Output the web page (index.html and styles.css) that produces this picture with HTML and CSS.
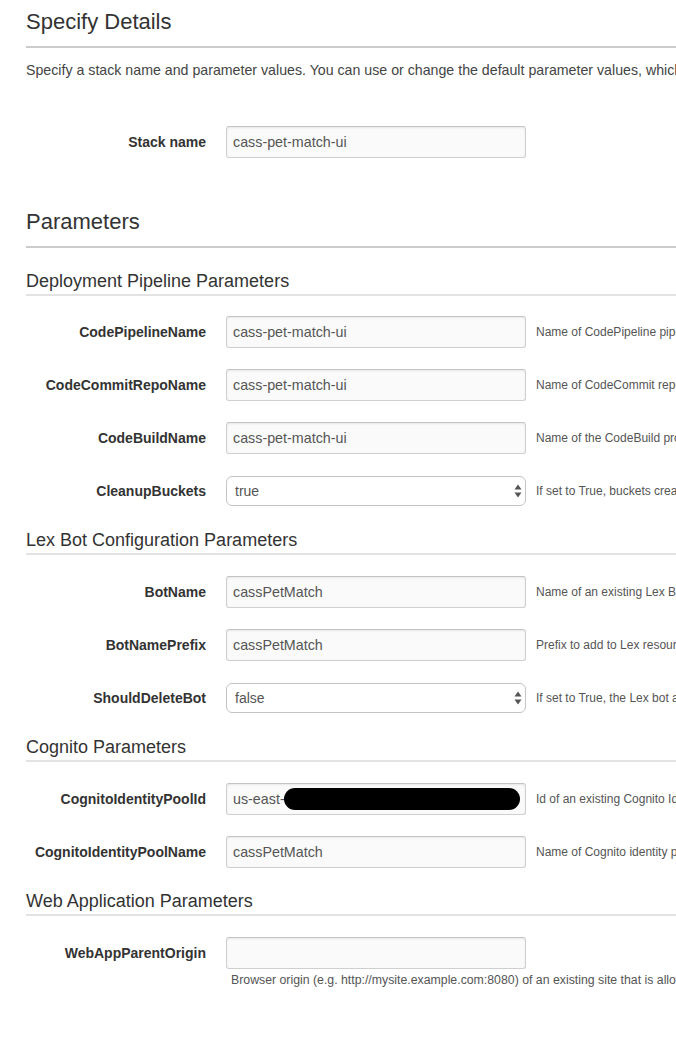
FILE: index.html
```html
<!DOCTYPE html>
<html>
<head>
<meta charset="utf-8">
<link rel="stylesheet" href="styles.css">
</head>
<body>
<main class="page">
  <h1 class="title">Specify Details</h1>
  <p class="intro">Specify a stack name and parameter values. You can use or change the default parameter values, which are defined in the AWS CloudFormation template.</p>

  <div class="row stack-row">
    <label class="label">Stack name</label>
    <input class="field" type="text" value="cass-pet-match-ui">
  </div>

  <h1 class="title params">Parameters</h1>

  <h2 class="group">Deployment Pipeline Parameters</h2>
  <div class="row first tight">
    <label class="label">CodePipelineName</label>
    <input class="field" type="text" value="cass-pet-match-ui">
    <span class="help">Name of CodePipeline pipeline</span>
  </div>
  <div class="row">
    <label class="label">CodeCommitRepoName</label>
    <input class="field" type="text" value="cass-pet-match-ui">
    <span class="help">Name of CodeCommit repository</span>
  </div>
  <div class="row">
    <label class="label">CodeBuildName</label>
    <input class="field" type="text" value="cass-pet-match-ui">
    <span class="help">Name of the CodeBuild project</span>
  </div>
  <div class="row">
    <label class="label">CleanupBuckets</label>
    <span class="select-wrap">
      <select class="select"><option>true</option><option>false</option></select>
      <svg class="arrows" width="8" height="14" viewBox="0 0 8 14"><path d="M4 0.5 L7.5 5.5 L0.5 5.5 Z M4 13.5 L7.5 8.5 L0.5 8.5 Z" fill="#555"/></svg>
    </span>
    <span class="help">If set to True, buckets created by this template will be deleted on stack deletion</span>
  </div>

  <h2 class="group">Lex Bot Configuration Parameters</h2>
  <div class="row first">
    <label class="label">BotName</label>
    <input class="field" type="text" value="cassPetMatch">
    <span class="help">Name of an existing Lex Bot to be used by the web app</span>
  </div>
  <div class="row">
    <label class="label">BotNamePrefix</label>
    <input class="field" type="text" value="cassPetMatch">
    <span class="help">Prefix to add to Lex resource names</span>
  </div>
  <div class="row">
    <label class="label">ShouldDeleteBot</label>
    <span class="select-wrap">
      <select class="select"><option>false</option><option>true</option></select>
      <svg class="arrows" width="8" height="14" viewBox="0 0 8 14"><path d="M4 0.5 L7.5 5.5 L0.5 5.5 Z M4 13.5 L7.5 8.5 L0.5 8.5 Z" fill="#555"/></svg>
    </span>
    <span class="help">If set to True, the Lex bot and associated resources will be deleted</span>
  </div>

  <h2 class="group">Cognito Parameters</h2>
  <div class="row first">
    <label class="label">CognitoIdentityPoolId</label>
    <span class="redact-wrap">
      <input class="field" type="text" value="us-east-">
      <span class="redact"></span>
    </span>
    <span class="help">Id of an existing Cognito Identity Pool</span>
  </div>
  <div class="row">
    <label class="label">CognitoIdentityPoolName</label>
    <input class="field" type="text" value="cassPetMatch">
    <span class="help">Name of Cognito identity pool</span>
  </div>

  <h2 class="group">Web Application Parameters</h2>
  <div class="row first">
    <label class="label">WebAppParentOrigin</label>
    <input class="field" type="text" value="">
  </div>
  <p class="help-below">Browser origin (e.g. http://mysite.example.com:8080) of an existing site that is allowed to send messages to this site</p>
</main>
</body>
</html>
```

FILE: styles.css
```css
html, body {
  margin: 0;
  padding: 0;
  background: #ffffff;
  overflow: hidden;
}

body {
  font-family: "Liberation Sans", Arial, sans-serif;
  color: #444444;
}

.page {
  width: 1100px;
  padding: 9px 0 60px 26px;
}

.title {
  margin: 0;
  font-size: 22px;
  line-height: 26px;
  font-weight: normal;
  color: #333333;
  padding-bottom: 11px;
  border-bottom: 2px solid #cccccc;
}

.title.params {
  margin-top: 51px;
}

.intro {
  margin: 13px 0 0 0;
  font-size: 14.2px;
  line-height: 18px;
  color: #444444;
  white-space: nowrap;
}

.group {
  margin: 22px 0 0 0;
  font-size: 18px;
  line-height: 22px;
  font-weight: normal;
  color: #333333;
  padding-bottom: 2px;
  border-bottom: 2px solid #e3e3e3;
}

.row {
  display: flex;
  align-items: center;
  height: 32px;
  margin-top: 21px;
}

.row.first {
  margin-top: 21px;
}

.row.first.tight {
  margin-top: 20px;
}

.stack-row {
  margin-top: 47px;
}

.label {
  width: 180px;
  flex: none;
  margin-right: 20px;
  text-align: right;
  font-size: 14px;
  font-weight: bold;
  color: #333333;
  white-space: nowrap;
}

.field {
  box-sizing: border-box;
  width: 300px;
  height: 32px;
  flex: none;
  margin: 0;
  padding: 0 6px;
  border: 1px solid #cfcfcf;
  border-top-color: #c4c4c4;
  border-radius: 3px;
  background: #fafafa;
  box-shadow: inset 0 1px 2px rgba(0, 0, 0, 0.08);
  font-family: "Liberation Sans", Arial, sans-serif;
  font-size: 14.3px;
  color: #555555;
  outline: none;
}

.select-wrap,
.redact-wrap {
  position: relative;
  display: block;
  width: 300px;
  flex: none;
}

.select {
  box-sizing: border-box;
  display: block;
  width: 300px;
  height: 30px;
  margin: 0;
  padding: 0 8px;
  border: 1px solid #c4c4c4;
  border-radius: 6px;
  background: #ffffff;
  -webkit-appearance: none;
  appearance: none;
  font-family: "Liberation Sans", Arial, sans-serif;
  font-size: 14px;
  color: #555555;
  outline: none;
}

.arrows {
  position: absolute;
  right: 4px;
  top: 8px;
  pointer-events: none;
}

.redact-wrap .field {
  display: block;
}

.redact {
  position: absolute;
  left: 58px;
  top: 5px;
  width: 236px;
  height: 22px;
  border-radius: 11px;
  background: #000000;
}

.help {
  margin-left: 10px;
  font-size: 12px;
  color: #555555;
  white-space: nowrap;
}

.help-below {
  margin: 4px 0 0 205px;
  font-size: 12.3px;
  line-height: 14px;
  color: #555555;
  white-space: nowrap;
}
```
